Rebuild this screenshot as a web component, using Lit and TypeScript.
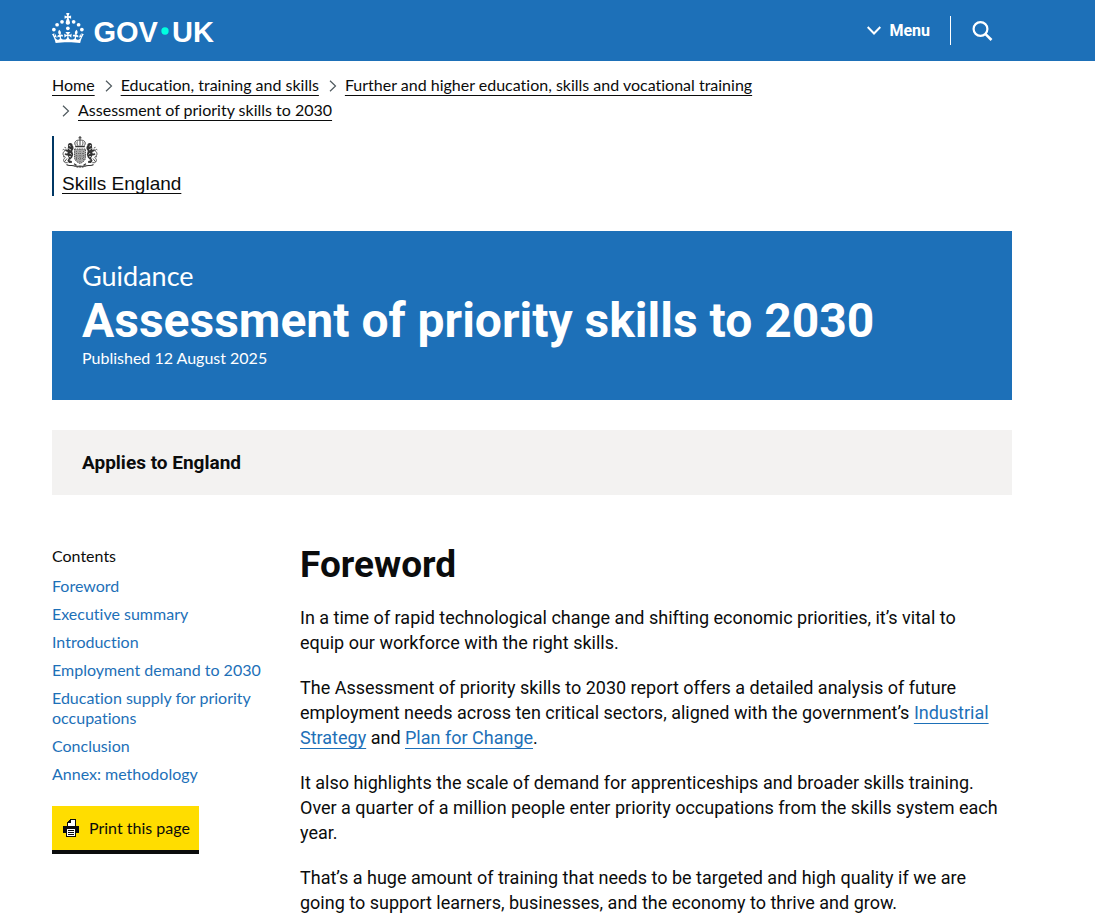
import { LitElement, html, svg, css } from "lit";
import { customElement } from "lit/decorators.js";

const crumbs = [
  "Home",
  "Education, training and skills",
  "Further and higher education, skills and vocational training",
  "Assessment of priority skills to 2030",
];

const contents = [
  "Foreword",
  "Executive summary",
  "Introduction",
  "Employment demand to 2030",
  "Education supply for priority occupations",
  "Conclusion",
  "Annex: methodology",
];

const crown = svg`
  <circle cx="20" cy="17.6" r="3.7" />
  <circle cx="10.2" cy="23.5" r="3.7" />
  <circle cx="3.7" cy="33.2" r="3.7" />
  <circle cx="31.7" cy="30.6" r="3.7" />
  <circle cx="43.3" cy="17.6" r="3.7" />
  <circle cx="53.2" cy="23.5" r="3.7" />
  <circle cx="59.7" cy="33.2" r="3.7" />
  <path d="M33.1,9.8c.2-.1.3-.3.5-.5l4.6,2.4v-6.8l-4.6,1.5c-.1-.2-.3-.3-.5-.5l1.9-5.9h-6.7l1.9,5.9c-.2.1-.3.3-.5.5l-4.6-1.5v6.8l4.6-2.4c.1.2.3.3.5.5l-2.6,8c-.9,2.8,1.2,5.7,4.1,5.7h0c3,0,5.1-2.9,4.1-5.7l-2.6-8ZM37,37.9s-3.4,3.8-4.1,6.1c2.2,0,4.2-.5,6.4-2.8l-.7,8.5c-2-2.8-4.4-4.1-5.7-3.8.1,3.1.5,6.7,5.8,7.2,3.7.3,6.7-1.5,7-3.8.4-2.6-2-4.3-3.7-1.6-1.4-4.5,2.4-6.1,4.9-3.2-1.9-4.5-1.8-7.7,2.4-10.9,3,4,2.6,7.3-1.2,11.1,2.4-1.3,6.2,0,4,4.6-1.2-2.8-3.7-2.2-4.2.2-.3,1.7.7,3.7,3,4.2,1.9.3,4.7-.9,7-5.9-1.3,0-2.4.7-3.9,1.7l2.4-8c.6,2.3,1.4,3.7,2.2,4.5.6-1.6.5-2.8,0-5.3l5,1.8c-2.6,3.6-5.2,8.7-7.3,17.5-7.4-1.1-15.7-1.7-24.5-1.7h0c-8.8,0-17.1.6-24.5,1.7-2.1-8.9-4.7-13.9-7.3-17.5l5-1.8c-.5,2.5-.6,3.7,0,5.3.8-.8,1.6-2.3,2.2-4.5l2.4,8c-1.5-1-2.6-1.7-3.9-1.7,2.3,5,5.2,6.2,7,5.9,2.3-.4,3.3-2.4,3-4.2-.5-2.4-3-3.1-4.2-.2-2.2-4.6,1.6-6,4-4.6-3.7-3.7-4.2-7.1-1.2-11.1,4.2,3.2,4.3,6.4,2.4,10.9,2.5-2.8,6.3-1.3,4.9,3.2-1.8-2.7-4.1-1-3.7,1.6.3,2.3,3.3,4.1,7,3.8,5.4-.5,5.7-4.2,5.8-7.2-1.3-.2-3.7,1-5.7,3.8l-.7-8.5c2.2,2.3,4.2,2.7,6.4,2.8-.7-2.3-4.1-6.1-4.1-6.1h10.6Z" />
`;

/* One supporter of the royal arms; mirrored for the other side. */
const supporter = svg`
  <path d="M6 10.500C5.500 8.500 6.500 7 8.200 7c1.600 0 2.600 1.100 2.400 2.600.9.900 1.100 2 .8 3.300l-1.200 2.100 1 3.500-1 3-2.200 2.300 2 1.700v1.300l-3 .2-1.600-2.300 1.500-2.700-1.200-2.500-1.900-.2-1.300-1.100.8-.9 1.900.4.600-1.800-2-.6-1-1.400 1.100-.6 1.700.8z" fill="#333" />
  <path d="M5 22.500l-2.500 3.300 1 .9h2.200M2.800 26.500C.8 24.500 1.500 22.500 3.500 21.500M3.200 20.800C.8 19.800.3 17 2.200 15.500 3.500 14.200 1.800 12.600.7 13.900M1 20.500l1.400.6M2.500 11.300l1.700.8" fill="none" stroke="#444" stroke-width=".9" />
  <path d="M6.800 9.300l1.800.9M6.500 12.500l2.500 1.500M7.800 17l1.500 1.500M7 20.500l2 .3M7.500 24l2 .5" stroke="#eee" fill="none" stroke-width=".9" />
`;

const crest = html`
  <svg class="crest" viewBox="0 0 36 32" fill="#262626" aria-hidden="true">
    ${supporter}
    <g transform="matrix(-1 0 0 1 36 0)">${supporter}</g>
    <g fill="none" stroke="#333">
      <path d="M18 0v4M16.500 1.800h3" />
      <path d="M13.500 9.500C11.500 6 14 3.800 18 4.200c4-.4 6.500 1.800 4.500 5.300M18 4.500v5M15.500 5.500c-.8 1.300-.5 2.600.3 4M20.500 5.500c.8 1.300.5 2.600-.3 4" stroke-width=".9" />
      <path d="M13.200 10.500h9.600" stroke-width="1.500" />
    </g>
    <path d="M12.500 13h11v8.500c0 3-3 5-5.500 6-2.500-1-5.500-3-5.500-6z" fill="#a6a6a6" />
    <path d="M12.500 13h11v8.500c0 3-3 5-5.500 6-2.500-1-5.500-3-5.500-6z" fill="none" stroke="#555" stroke-dasharray="1.500 .8" />
    <path d="M18 13v14M12.500 20h11M14.500 15v10M21.500 15v10M14 17.500h8M14 22.500h8" fill="none" stroke="#555" stroke-width=".7" stroke-dasharray="1 1" />
    <path d="M4.500 28.500c2.500 2 4.500.3 7 1.200 2.200.9 4 .4 6.500.4s4.300.5 6.500-.4c2.500-.9 4.500.8 7-1.200M12 27.800l2.500 1.500M24 27.800l-2.500 1.500" fill="none" stroke="#333" stroke-width="1.100" />
    <path d="M14.500 31h7" stroke="#333" stroke-width="1.200" stroke-dasharray="2 .6" />
  </svg>
`;

@customElement("app-root")
export class AppRoot extends LitElement {
  static styles = css`
    :host {
      display: block;
      color: #0b0c0c;
      background: #fff;
      font-family: Roboto, "Liberation Sans", sans-serif;
      font-size: 18px;
      line-height: 25px;
      font-variant-ligatures: none;
    }
    * {
      box-sizing: border-box;
    }
    h1, h2, p, ol {
      margin: 0;
      padding: 0;
    }
    ol {
      list-style: none;
    }
    a {
      color: #1d70b8;
      text-decoration-thickness: 1px;
      text-underline-offset: 4px;
      text-decoration-skip-ink: none;
    }
    .wrap {
      max-width: 960px;
      margin: 0 auto;
    }
    .page, .bar {
      padding: 0 31px 0 0;
    }
    .bar {
      background: #1d70b8;
      color: #fff;
    }
    .bar-inner {
      display: flex;
      align-items: center;
      justify-content: space-between;
      height: 61px;
    }
    .logo {
      display: flex;
      margin-top: -5px;
    }
    .logo svg {
      width: 164px;
      height: 30px;
      fill: #fff;
      overflow: visible;
    }
    .logo text {
      font: 700 58px "Liberation Sans", Arial, sans-serif;
    }
    .tools {
      display: flex;
      align-items: center;
    }
    .tools button {
      display: flex;
      align-items: center;
      border: 0;
      padding: 0 19px 0 21px;
      height: 29px;
      background: none;
      color: inherit;
      font: 700 16px/20px Roboto, sans-serif;
      cursor: pointer;
    }
    .tools .menu {
      gap: 8px;
      padding: 0 20px;
      border-right: 1px solid #fff;
    }
    .tools svg {
      fill: none;
      stroke: #fff;
    }
    .small, .crumbs, .contents, .print {
      font-family: Lato, sans-serif;
      font-size: 16px;
      line-height: 20px;
    }
    .crumbs {
      display: flex;
      flex-wrap: wrap;
      padding-top: 11px;
      line-height: 25px;
    }
    .crumbs a {
      color: #0b0c0c;
    }
    .crumbs li {
      display: flex;
      align-items: center;
    }
    .crumbs svg {
      width: 8px;
      height: 12px;
      margin: 2px 8px 0 10px;
      fill: none;
      stroke: #505a5f;
      stroke-width: 1.2;
    }
    .org {
      display: flex;
      flex-direction: column;
      align-items: flex-start;
      margin: 14px 0 35px;
      padding-left: 8px;
      border-left: 2px solid #003764;
      height: 60px;
    }
    .crest {
      width: 36px;
      height: 32px;
    }
    .org a {
      margin-top: 3px;
      color: #0b0c0c;
      font: 19px/25px "Liberation Sans", Arial, sans-serif;
      text-underline-offset: 3px;
    }
    .hero {
      padding: 30px 30px 32px;
      background: #1d70b8;
      color: #fff;
    }
    .hero .kind {
      font: 27px/30px Lato, sans-serif;
    }
    .hero h1 {
      padding-top: 3px;
      font-size: 48px;
      line-height: 54px;
    }
    .applies {
      margin: 30px 0 50px;
      padding: 20px 30px;
      background: #f3f2f1;
      font-size: 19px;
      font-weight: 700;
    }
    .columns {
      display: flex;
      gap: 30px;
      align-items: flex-start;
    }
    .side {
      flex: 0 0 218px;
      padding-top: 1px;
    }
    .contents h2 {
      font: inherit;
      margin-bottom: 10px;
    }
    .contents ol {
      display: grid;
      gap: 8px;
    }
    .contents a {
      text-decoration: none;
    }
    .print {
      display: flex;
      align-items: center;
      gap: 10px;
      margin-top: 22px;
      padding: 12px 9px 12px 11px;
      border: 0;
      border-bottom: 4px solid #0b0c0c;
      background: #ffdd00;
      color: #0b0c0c;
      cursor: pointer;
    }
    .body {
      flex: 1;
      min-width: 0;
      padding-right: 10px;
      display: grid;
      gap: 20px;
    }
    .body h2 {
      font-size: 37px;
      line-height: 40px;
    }
    @media (max-width: 1000px) {
      .page, .bar {
        padding: 0 30px;
      }
    }
    @media (max-width: 640px) {
      .columns {
        flex-direction: column;
      }
      .side {
        flex: none;
      }
    }
  `;

  render() {
    return html`
      <header class="bar">
        <div class="wrap bar-inner">
          <a class="logo" href="#" aria-label="GOV.UK">
            <svg viewBox="0 0 328 60">
              ${crown}
              <text x="83" y="57">GOV</text>
              <circle cx="226" cy="36" r="7.3" fill="#00ffe0" />
              <text x="240" y="57">UK</text>
            </svg>
          </a>
          <div class="tools">
            <button class="menu" type="button">
              <svg width="14" height="9" viewBox="0 0 14 9" stroke-width="2"><path d="M.7 1 7 7.500 13.300 1" /></svg>
              Menu
            </button>
            <button type="button" aria-label="Search">
              <svg width="21" height="20" viewBox="0 0 21 20" stroke-width="2.200">
                <circle cx="8.500" cy="8" r="6.900" />
                <path d="M13.300 12.800 19.500 19" stroke-width="2.600" />
              </svg>
            </button>
          </div>
        </div>
      </header>
      <div class="page">
        <main class="wrap">
          <nav aria-label="Breadcrumb">
            <ol class="crumbs">
              ${crumbs.map(
                (label, i) => html`<li>
                  ${i ? html`<svg viewBox="0 0 8 12"><path d="M1 .7 6.500 6 1 11.300" /></svg>` : ""}<a href="#">${label}</a>
                </li>`
              )}
            </ol>
          </nav>
          <div class="org">${crest}<a href="#">Skills England</a></div>
          <header class="hero">
            <p class="kind">Guidance</p>
            <h1>Assessment of priority skills to 2030</h1>
            <p class="small">Published 12 August 2025</p>
          </header>
          <p class="applies">Applies to England</p>
          <div class="columns">
            <div class="side">
              <nav class="contents" aria-label="Contents">
                <h2>Contents</h2>
                <ol>
                  ${contents.map((label) => html`<li><a href="#">${label}</a></li>`)}
                </ol>
              </nav>
              <button class="print" type="button">
                <svg width="16" height="18" viewBox="0 0 16 18" shape-rendering="crispEdges">
                  <path d="M0 7h16v7H0z" fill="#0b0c0c" />
                  <path d="M7 0h6v7H4V3h1V2h1V1h1z" fill="#0b0c0c" />
                  <path d="M8 1h4v6H5V4h3z" fill="#fff" />
                  <path d="M3 9h10v9H3z" fill="#0b0c0c" />
                  <path d="M4 10h8v7H4z" fill="#fff" />
                  <path d="M5 11h6v1H5zM5 13h6v1H5zM5 15h6v1H5z" fill="#0b0c0c" />
                </svg>
                Print this page
              </button>
            </div>
            <article class="body">
              <h2>Foreword</h2>
              <p>In a time of rapid technological change and shifting economic priorities, it’s vital to equip our workforce with the right skills.</p>
              <p>The Assessment of priority skills to 2030 report offers a detailed analysis of future employment needs across ten critical sectors, aligned with the government’s <a href="#">Industrial Strategy</a> and <a href="#">Plan for Change</a>.</p>
              <p>It also highlights the scale of demand for apprenticeships and broader skills training. Over a quarter of a million people enter priority occupations from the skills system each year.</p>
              <p>That’s a huge amount of training that needs to be targeted and high quality if we are going to support learners, businesses, and the economy to thrive and grow.</p>
            </article>
          </div>
        </main>
      </div>
    `;
  }
}
